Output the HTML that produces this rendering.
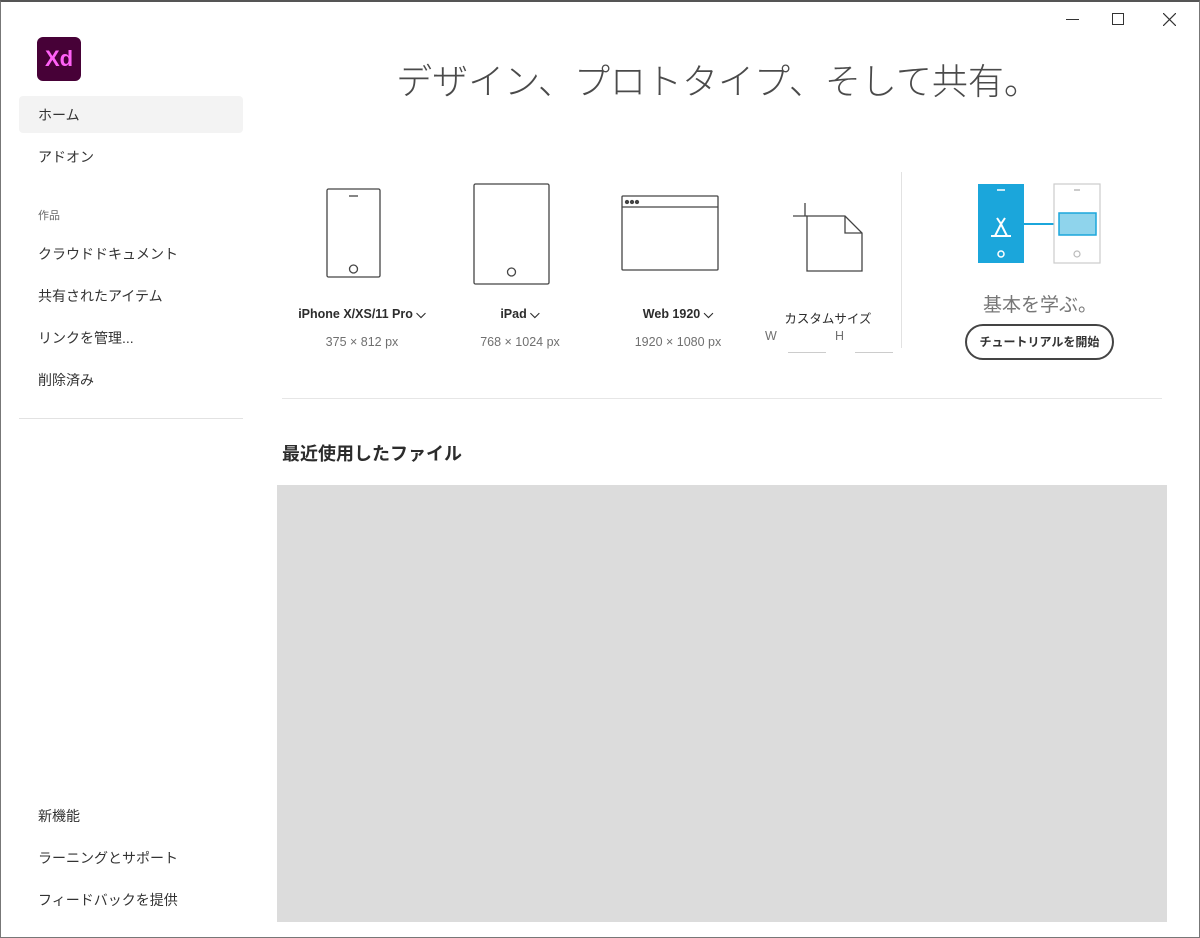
<!DOCTYPE html>
<html><head><meta charset="utf-8"><style>
*{margin:0;padding:0;box-sizing:border-box}
body{width:1200px;height:938px;background:#fff;font-family:"Liberation Sans","Noto Sans CJK JP",sans-serif;color:#333;position:relative;overflow:hidden}
.a{position:absolute}
.nav{position:absolute;left:38px;font-size:14px;color:#333}
.lbl{position:absolute;font-size:12.5px;font-weight:bold;color:#2c2c2c;text-align:center;white-space:nowrap}
.sub{position:absolute;font-size:12.5px;color:#707070;text-align:center;white-space:nowrap}
</style></head><body>
<div class="a" style="left:0;top:0;width:1200px;height:938px;border:1px solid #777;border-top:2px solid #555"></div>
<div class="a" style="left:1066px;top:19px;width:13px;height:1px;background:#333"></div>
<div class="a" style="left:1112px;top:13px;width:12px;height:12px;border:1px solid #333"></div>
<svg class="a" style="left:1163px;top:13px" width="13" height="13"><path d="M0 0L13 13M13 0L0 13" stroke="#333" stroke-width="1.2"/></svg>

<div class="a" style="left:37px;top:37px;width:44px;height:44px;background:#470137;border-radius:6px;color:#ff61f6;font-weight:bold;font-size:22px;line-height:44px;text-align:center">Xd</div>
<div class="a" style="left:19px;top:96px;width:224px;height:37px;background:#f3f3f3;border-radius:4px"></div>
<div class="nav" style="top:105px">ホーム</div>
<div class="nav" style="top:147px">アドオン</div>
<div class="nav" style="top:207px;font-size:11px;color:#666">作品</div>
<div class="nav" style="top:244px">クラウドドキュメント</div>
<div class="nav" style="top:286px">共有されたアイテム</div>
<div class="nav" style="top:328px">リンクを管理...</div>
<div class="nav" style="top:370px">削除済み</div>
<div class="a" style="left:19px;top:418px;width:224px;height:1px;background:#e2e2e2"></div>
<div class="nav" style="top:806px">新機能</div>
<div class="nav" style="top:848px">ラーニングとサポート</div>
<div class="nav" style="top:890px">フィードバックを提供</div>

<div class="a" style="left:282px;top:53px;width:872px;text-align:center;font-size:36px;font-weight:300;color:#4a4a4a">デザイン、プロトタイプ、そして共有。</div>

<svg class="a" style="left:326px;top:188px" width="56" height="92" fill="none" stroke="#444" stroke-width="1.3"><rect x="1" y="1" width="53" height="88" rx="1.5"/><path d="M23 8h9"/><circle cx="27.5" cy="81" r="4"/></svg>
<svg class="a" style="left:473px;top:183px" width="78" height="102" fill="none" stroke="#444" stroke-width="1.3"><rect x="1" y="1" width="75" height="100" rx="1.5"/><circle cx="38.5" cy="89" r="4"/></svg>
<svg class="a" style="left:621px;top:195px" width="98" height="78" fill="none" stroke="#444" stroke-width="1.3"><rect x="1" y="1" width="96" height="74" rx="1"/><path d="M1 12h96"/><circle cx="6" cy="7" r="1.5" fill="#444"/><circle cx="11" cy="7" r="1.5" fill="#444"/><circle cx="16" cy="7" r="1.5" fill="#444"/></svg>
<svg class="a" style="left:790px;top:200px" width="76" height="74" fill="none" stroke="#444" stroke-width="1.3"><path d="M3 16h14M15 3v13"/><path d="M17 16h38l17 17v38H17z"/><path d="M55 16v17h17"/></svg>

<div class="lbl" style="left:282px;top:307px;width:160px">iPhone X/XS/11 Pro ⌵</div>
<div class="sub" style="left:282px;top:335px;width:160px">375 × 812 px</div>
<div class="lbl" style="left:440px;top:307px;width:160px">iPad ⌵</div>
<div class="sub" style="left:440px;top:335px;width:160px">768 × 1024 px</div>
<div class="lbl" style="left:598px;top:307px;width:160px">Web 1920 ⌵</div>
<div class="sub" style="left:598px;top:335px;width:160px">1920 × 1080 px</div>
<div class="lbl" style="left:768px;top:308px;width:120px;font-weight:normal">カスタムサイズ</div>
<div class="sub" style="left:765px;top:329px">W</div>
<div class="sub" style="left:835px;top:329px">H</div>
<div class="a" style="left:788px;top:352px;width:38px;height:1px;background:#ccc"></div>
<div class="a" style="left:855px;top:352px;width:38px;height:1px;background:#ccc"></div>
<div class="a" style="left:901px;top:172px;width:1px;height:176px;background:#e2e2e2"></div>

<svg class="a" style="left:977px;top:183px" width="126" height="82"><rect x="1" y="1" width="46" height="79" fill="#1ba6db"/><path d="M20 7h8" stroke="#fff" stroke-width="1.5"/><circle cx="24" cy="71" r="3" fill="none" stroke="#fff" stroke-width="1.5"/><path d="M18 53l6-12 6 12M24 41l-4-6M24 41l4-6M14 53h20" fill="none" stroke="#fff" stroke-width="2"/><path d="M47 41h32" stroke="#1ba6db" stroke-width="2"/><rect x="77" y="1" width="46" height="79" fill="#fff" stroke="#ccc" stroke-width="1.2"/><path d="M97 7h6" stroke="#bbb" stroke-width="1.5"/><circle cx="100" cy="71" r="3" fill="none" stroke="#bbb" stroke-width="1.2"/><rect x="82" y="30" width="37" height="22" fill="#8fd4ec" stroke="#1ba6db" stroke-width="1.5"/></svg>
<div class="a" style="left:940px;top:290px;width:200px;text-align:center;font-size:19px;color:#777">基本を学ぶ。</div>
<div class="a" style="left:965px;top:324px;width:149px;height:36px;border:2px solid #444;border-radius:18px;text-align:center;line-height:32px;font-size:12px;font-weight:bold;color:#333">チュートリアルを開始</div>

<div class="a" style="left:282px;top:398px;width:880px;height:1px;background:#e6e6e6"></div>
<div class="a" style="left:282px;top:440px;font-size:18px;font-weight:bold;color:#2c2c2c">最近使用したファイル</div>
<div class="a" style="left:277px;top:485px;width:890px;height:437px;background:#dcdcdc"></div>
</body></html>
